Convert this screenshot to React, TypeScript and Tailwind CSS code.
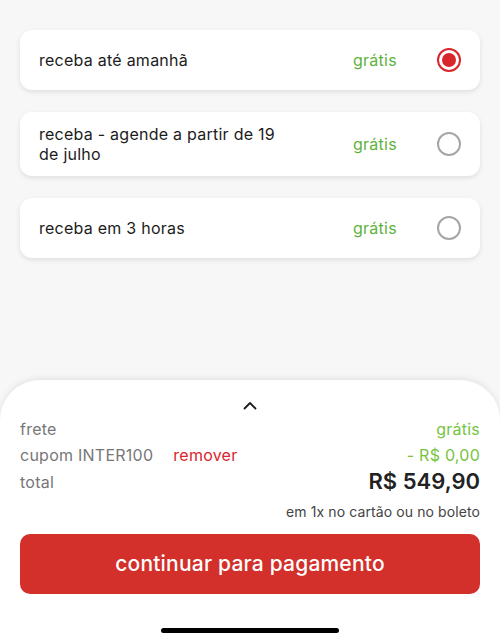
import React from "react";

function Radio({ checked }: { checked: boolean }) {
  if (checked) {
    return (
      <div className="w-[24px] h-[24px] rounded-full border-[2.5px] border-[#d9262b] flex items-center justify-center">
        <div className="w-[14px] h-[14px] rounded-full bg-[#d9262b]" />
      </div>
    );
  }
  return <div className="w-[24px] h-[24px] rounded-full border-2 border-[#a6a6a6]" />;
}

function Option({ label, checked }: { label: string; checked?: boolean }) {
  return (
    <div className="mx-[20px] bg-white rounded-[12px] shadow-[0_2px_5px_rgba(0,0,0,0.10)] min-h-[60px] py-[12px] pl-[19px] pr-[19px] flex items-center">
      <div className="flex-1 text-[16px] leading-[20px] tracking-[0.25px] text-[#1c1c1c] pr-4">
        <div className="max-w-[250px]">{label}</div>
      </div>
      <div className="text-[16px] tracking-[0.25px] text-[#5db33b] w-[45px] mr-[39px]">grátis</div>
      <Radio checked={!!checked} />
    </div>
  );
}

export default function App() {
  return (
    <div
      className="w-[500px] h-[644px] bg-[#f7f7f7] flex flex-col overflow-hidden"
      style={{ fontFamily: "Inter, 'Noto Sans', sans-serif" }}
    >
      <div className="pt-[30px] flex flex-col gap-[22px]">
        <Option label="receba até amanhã" checked />
        <Option label="receba - agende a partir de 19 de julho" />
        <Option label="receba em 3 horas" />
      </div>
      <div className="flex-1" />
      <div className="h-[264px] bg-white rounded-t-[40px] shadow-[0_-2px_6px_rgba(0,0,0,0.08)] flex flex-col px-[20px] pt-[16px]">
        <div className="flex justify-center h-[18px] items-center">
          <svg width="14" height="9" viewBox="0 0 14 9" fill="none">
            <path d="M1.5 7.5 L7 2 L12.5 7.5" stroke="#1c1c1c" strokeWidth="1.8" strokeLinecap="round" strokeLinejoin="round" />
          </svg>
        </div>
        <div className="flex flex-col mt-[2px] tracking-[0.25px]">
          <div className="flex items-center justify-between h-[26px] text-[16px]">
            <span className="text-[#777]">frete</span>
            <span className="text-[#76c442]">grátis</span>
          </div>
          <div className="flex items-center justify-between h-[26px] text-[16px]">
            <div className="flex items-center">
              <span className="text-[#777]">cupom INTER100</span>
              <span className="text-[#d9262b] ml-[20px]">remover</span>
            </div>
            <span className="text-[#76c442]">- R$ 0,00</span>
          </div>
          <div className="flex items-center justify-between h-[27px]">
            <span className="text-[#777] text-[16px]">total</span>
            <span className="text-[#222] text-[22px] font-semibold tracking-normal">R$ 549,90</span>
          </div>
          <div className="flex justify-end items-center h-[30px] pt-[2px] text-[14px] tracking-[0.1px] text-[#444]">
            em 1x no cartão ou no boleto
          </div>
        </div>
        <button className="mt-[9px] h-[60px] w-full rounded-[10px] bg-[#d32f2b] text-white text-[21px] font-medium tracking-[0.2px] flex items-center justify-center">
          continuar para pagamento
        </button>
        <div className="flex-1 flex items-end justify-center pb-[11px]">
          <div className="w-[178px] h-[5px] rounded-full bg-black" />
        </div>
      </div>
    </div>
  );
}
